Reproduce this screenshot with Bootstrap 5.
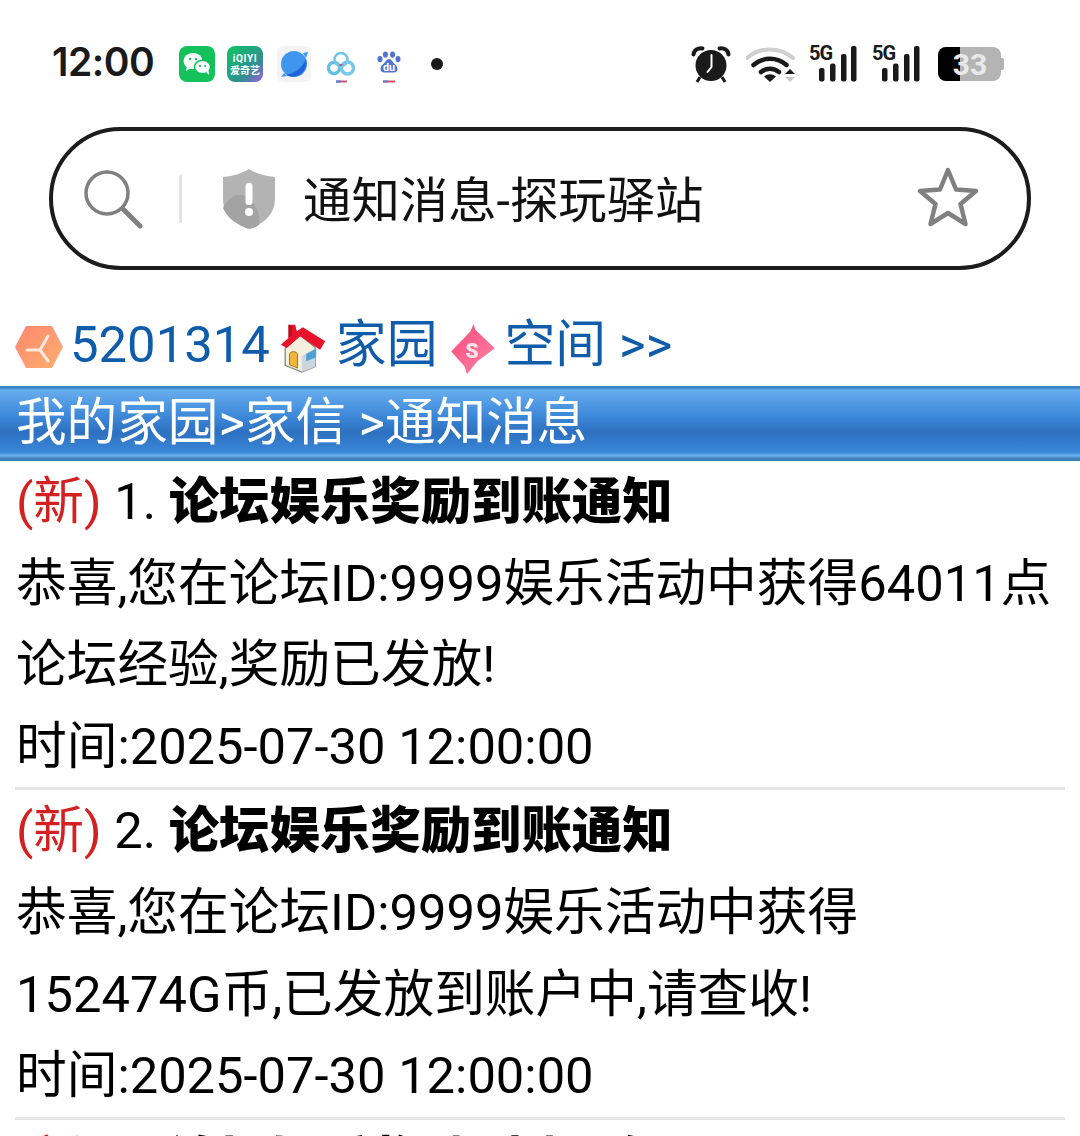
<!DOCTYPE html>
<html lang="zh">
<head>
<meta charset="utf-8">
<title>通知消息-探玩驿站</title>
<link href="https://cdn.jsdelivr.net/npm/bootstrap@5.3.0/dist/css/bootstrap.min.css" rel="stylesheet">
<style>
  html, body { height: 1136px; overflow: hidden; background: #fff; }
  body { font-family: Roboto, "Noto Sans CJK SC", sans-serif; color: #000; }
  .phone-bar { height: 127px; padding: 0 76px 0 52px; }
  .clock { font-family: Inter, Roboto, sans-serif; font-size: 39px; font-weight: 600; color: #1a1a1a; width: 127px; letter-spacing: -.5px; margin-top: -2px; }
  .notif-dot { width: 12px; height: 12px; border-radius: 50%; background: #1a1a1a; margin-left: 27px; }
  .sb-gap-12 { margin-left: 12px; }
  .sb-gap-14 { margin-left: 14px; }
  .sb-gap-15 { margin-left: 15px; }
  .sb-gap-18 { margin-left: 18px; }
  .sb-gap-11 { margin-left: 11px; }
  .sb-gap-13 { margin-left: 13px; }
  .sb-gap-16 { margin-left: 16px; }
  .sb-signal { overflow: visible; }
  .addr-box { height: 143px; margin: 0 49px; border: 4px solid #1c1c1c; border-radius: 72px; padding: 0 48px 0 30px; }
  .addr-sep { width: 3px; height: 48px; background: #e2e2e2; margin: 0 38px 0 36px; }
  .addr-icon-shield { margin-left: 2px; }
  .addr-title { font-size: 48.4px; color: #111; margin: 7px 0 0 27px; line-height: 1; }
  .addr-star { margin-bottom: 4px; }
  .top-links { height: 116px; padding: 50px 0 0 15px; font-size: 50.8px; color: #0f5cab; line-height: 1; white-space: nowrap; }
  .link-hex { margin: 6px 7px 0 0; }
  .link-home { margin: 3px 9px 0 10px; }
  .link-spark { margin: 3px 9px 0 14px; }
  .link-more { margin-left: 13px; }
  .head-strip { height: 75px; font-size: 50.6px; line-height: 74px; color: #fff; padding-left: 16px; white-space: nowrap;
    background: linear-gradient(#3f83c4 0, #3f83c4 3%, #67adee 5%, #3d88d8 40%, #2d71c0 62%, #3a86d8 88%, #69b0ef 93%, #3f7fb8 97%); }
  .msg-line { font-size: 50.7px; line-height: 81.6px; padding-left: 16px; color: #000; white-space: nowrap; }
  .msg-line b { font-weight: 900; font-size: 50.4px; }
  .new-tag { color: #d42020; }
  .msg-rule { height: 3px; background: #e6e6e6; margin: 0 15px; }
</style>
</head>
<body>

<!-- status bar -->
<div class="phone-bar d-flex align-items-center justify-content-between">
  <div class="d-flex align-items-center">
    <div class="clock">12:00</div>
    <svg width="36" height="36" viewBox="0 0 36 36">
      <rect width="36" height="36" rx="8" fill="#14c25c"/>
      <ellipse cx="14" cy="15" rx="9.500" ry="8" fill="#fff"/>
      <path d="M8 20l-1 5 5-3z" fill="#fff"/>
      <ellipse cx="23.500" cy="21" rx="8" ry="6.800" fill="#fff" stroke="#14c25c" stroke-width="1.500"/>
      <path d="M27 26l3 3-.5-5z" fill="#fff"/>
      <circle cx="11" cy="13" r="1.200" fill="#14c25c"/><circle cx="17" cy="13" r="1.200" fill="#14c25c"/>
      <circle cx="21" cy="20" r="1.100" fill="#14c25c"/><circle cx="26" cy="20" r="1.100" fill="#14c25c"/>
    </svg>
    <svg class="sb-gap-12" width="36" height="36" viewBox="0 0 36 36">
      <defs><linearGradient id="iqiyi" x1="0" y1="0" x2="1" y2="1"><stop offset=".1" stop-color="#12bf6a"/><stop offset=".65" stop-color="#2f8f92"/><stop offset="1" stop-color="#a45be0"/></linearGradient></defs>
      <rect width="36" height="36" rx="8" fill="url(#iqiyi)"/>
      <text x="18" y="16" text-anchor="middle" font-family="Roboto, sans-serif" font-size="10" font-weight="700" fill="#fff" letter-spacing=".6">iQIYI</text>
      <text x="18" y="28" text-anchor="middle" font-family="'Noto Sans CJK SC', sans-serif" font-size="10" font-weight="700" fill="#fff">爱奇艺</text>
    </svg>
    <svg class="sb-gap-14" width="34" height="36" viewBox="0 0 34 36">
      <rect width="34" height="36" rx="6" fill="#f3f3f3"/>
      <circle cx="17" cy="18" r="13" fill="#3f96ee"/>
      <path d="M29 13c-3 8-10 14-20 16 5 3 13 2 17-3 3-4 4-9 3-13z" fill="#1f63d8"/>
      <path d="M26 7l5-1-2 6zM7 27l-3 4 6-1z" fill="#3f96ee"/>
    </svg>
    <svg class="sb-gap-15" width="30" height="38" viewBox="0 0 30 38">
      <circle cx="8" cy="23" r="5.500" fill="none" stroke="#62c0e4" stroke-width="3.500"/>
      <circle cx="21.500" cy="23" r="6" fill="none" stroke="#7cc8ea" stroke-width="3.500"/>
      <circle cx="15" cy="14.500" r="6.500" fill="none" stroke="#72c8e6" stroke-width="2.500"/>
      <path d="M10.500 16.500a5 5 0 0 0 9 0l-4.500 5z" fill="#d8406c"/>
      <rect x="10" y="35.500" width="11" height="2" fill="#d8506e"/>
      <rect x="10" y="35.500" width="5" height="2" fill="#5b7fd0"/>
    </svg>
    <svg class="sb-gap-18" width="30" height="38" viewBox="0 0 30 38">
      <g transform="translate(1.500 6) scale(.9)">
        <ellipse cx="5" cy="9" rx="2.800" ry="3.500" fill="#4f73cf"/>
        <ellipse cx="11" cy="4" rx="2.800" ry="3.500" fill="#4f73cf"/>
        <ellipse cx="19" cy="4" rx="2.800" ry="3.500" fill="#4f73cf"/>
        <ellipse cx="25" cy="9" rx="2.800" ry="3.500" fill="#4f73cf"/>
        <path d="M15 9c-3 0-4 4-7 6-3 2-4 9 2 9h10c6 0 5-7 2-9-3-2-4-6-7-6z" fill="#4f73cf"/>
        <text x="15" y="22" text-anchor="middle" font-family="Roboto, sans-serif" font-size="12" font-weight="700" fill="#fff">du</text>
      </g>
      <rect x="9" y="35.500" width="12" height="2" fill="#d8506e"/>
      <rect x="9" y="35.500" width="5" height="2" fill="#5b7fd0"/>
    </svg>
    <div class="notif-dot"></div>
  </div>

  <div class="d-flex align-items-center">
    <svg width="40" height="40" viewBox="0 0 40 40">
      <circle cx="20" cy="21.500" r="15.500" fill="#1a1a1a"/>
      <path d="M2.500 10.500a7 7 0 0 1 9-6M37.500 10.500a7 7 0 0 0-9-6" fill="none" stroke="#1a1a1a" stroke-width="4" stroke-linecap="round"/>
      <path d="M9 33l-3 5M31 33l3 5" stroke="#1a1a1a" stroke-width="3"/>
      <path d="M20.500 11v12l-4 5" fill="none" stroke="#fff" stroke-width="2" stroke-linecap="round"/>
    </svg>
    <svg class="sb-gap-15" width="52" height="38" viewBox="0 0 52 38">
      <path d="M1 13a35 35 0 0 1 46 0" fill="none" stroke="#cfcfcf" stroke-width="4" stroke-linecap="round"/>
      <path d="M7.500 20a25 25 0 0 1 33 0" fill="none" stroke="#1a1a1a" stroke-width="4.500" stroke-linecap="round"/>
      <path d="M15 27a14 14 0 0 1 18 0" fill="none" stroke="#1a1a1a" stroke-width="4.500" stroke-linecap="round"/>
      <path d="M24 37l-6-5.500a9 9 0 0 1 12 0z" fill="#1a1a1a"/>
      <path d="M39 29h10l-5-5z" fill="#1a1a1a"/>
      <path d="M39 32h10l-5 5z" fill="#c8c8c8"/>
    </svg>
    <svg class="sb-gap-11 sb-signal" width="50" height="38" viewBox="0 0 50 38">
      <text x="0" y="15" font-family="Roboto, sans-serif" font-size="20" font-weight="700" fill="#1a1a1a" letter-spacing="-1">5G</text>
      <rect x="10" y="23" width="5.500" height="13.500" rx="2" fill="#1a1a1a"/>
      <rect x="21" y="18.500" width="5.500" height="18" rx="2" fill="#1a1a1a"/>
      <rect x="32" y="9" width="5.500" height="27.500" rx="2" fill="#1a1a1a"/>
      <rect x="42" y="1" width="5.500" height="35.500" rx="2" fill="#1a1a1a"/>
    </svg>
    <svg class="sb-gap-13 sb-signal" width="50" height="38" viewBox="0 0 50 38">
      <text x="0" y="15" font-family="Roboto, sans-serif" font-size="20" font-weight="700" fill="#1a1a1a" letter-spacing="-1">5G</text>
      <rect x="10" y="23" width="5.500" height="13.500" rx="2" fill="#1a1a1a"/>
      <rect x="21" y="18.500" width="5.500" height="18" rx="2" fill="#1a1a1a"/>
      <rect x="32" y="9" width="5.500" height="27.500" rx="2" fill="#1a1a1a"/>
      <rect x="42" y="1" width="5.500" height="35.500" rx="2" fill="#1a1a1a"/>
    </svg>
    <svg class="sb-gap-16" width="66" height="34" viewBox="0 0 66 34">
      <rect x="0" y="0" width="63" height="34" rx="8" fill="#b4b4b4"/>
      <path d="M8 0h14v34H8a8 8 0 0 1-8-8V8a8 8 0 0 1 8-8z" fill="#000"/>
      <path d="M63 11h1a2 2 0 0 1 2 2v8a2 2 0 0 1-2 2h-1z" fill="#b4b4b4"/>
      <text x="32" y="28" text-anchor="middle" font-family="Roboto, sans-serif" font-size="30" font-weight="700" fill="#e9e9e9">33</text>
    </svg>
  </div>
</div>

<!-- address bar -->
<div class="addr-box d-flex align-items-center">
  <svg width="60" height="60" viewBox="0 0 60 60">
    <circle cx="24" cy="24" r="21" fill="none" stroke="#808080" stroke-width="3.500"/>
    <path d="M40 40l17 17" stroke="#808080" stroke-width="5" stroke-linecap="round"/>
  </svg>
  <div class="addr-sep"></div>
  <svg class="addr-icon-shield" width="54" height="62" viewBox="0 0 54 62">
    <path d="M27 1c6 4 15 7 26 8v22c0 15-11 25-26 30C12 56 1 46 1 31V9c11-1 20-4 26-8z" fill="#b3b3b3"/>
    <path d="M1 40C8 26 20 24 27 30c8 7 12 20 10 27-3 2-6 3-10 4C14 56 5 50 1 40z" fill="#a3a3a3"/>
    <rect x="23.500" y="15" width="7" height="22" rx="3" fill="#fff"/>
    <circle cx="27" cy="44" r="4" fill="#fff"/>
  </svg>
  <div class="addr-title flex-grow-1">通知消息-探玩驿站</div>
  <svg class="addr-star" width="62" height="60" viewBox="0 0 62 60">
    <path d="M31 3l8 19.500 20 1.500-15.500 13 5 20L31 46 13.500 57l5-20L3 24l20-1.500z" fill="none" stroke="#808080" stroke-width="4.500" stroke-linejoin="round"/>
  </svg>
</div>

<!-- user links -->
<div class="top-links d-flex align-items-start">
  <svg class="link-hex flex-shrink-0" width="48" height="42" viewBox="0 0 48 42">
    <defs><linearGradient id="hexfill" x1="0" y1="0" x2="1" y2="1"><stop offset="0" stop-color="#ff8670"/><stop offset="1" stop-color="#fdb070"/></linearGradient></defs>
    <path d="M11 0h26l11 21-11 21H11L0 21z" fill="url(#hexfill)"/>
    <path d="M25 24L12 24M25 24l8-14M25 24l8 11" stroke="#ffe9dc" stroke-width="3" stroke-linecap="round" fill="none"/>
  </svg>
  <span>5201314</span>
  <svg class="link-home flex-shrink-0" width="47" height="50" viewBox="10 25 140 150">
    <path d="M25 100L70 62l45 36v58l-40 16-50-20z" fill="#f6efdd" stroke="#8a8a80" stroke-width="4"/>
    <path d="M75 172l40-16V100L75 125z" fill="#c9d6dc"/>
    <path d="M88 118l30-16v26l-30 12z" fill="#4f9fd8"/>
    <path d="M38 150v-30c0-12 24-12 24 0v40z" fill="#f2b53c" stroke="#a07820" stroke-width="3"/>
    <path d="M12 90l23-20V30h20l5 20 18-12 67 42-15 25-16-10-44-30-40 35z" fill="#e8122c"/>
    <path d="M12 90l23-20V30l10 2v30z" fill="#b8101f"/>
  </svg>
  <span>家园</span>
  <svg class="link-spark flex-shrink-0" width="44" height="52" viewBox="28 25 130 155">
    <defs><linearGradient id="sparkfill" x1="0" y1="0" x2="1" y2="1"><stop offset="0" stop-color="#f6487c"/><stop offset="1" stop-color="#ff86a6"/></linearGradient></defs>
    <path d="M95 28l5 17 58 55-53 40-30 38-7-23-40-45 57-60z" fill="url(#sparkfill)"/>
    <text x="90" y="130" text-anchor="middle" font-family="Roboto, sans-serif" font-size="62" font-weight="900" fill="#ffe3ea">S</text>
  </svg>
  <span>空间</span>
  <span class="link-more">&gt;&gt;</span>
</div>

<div class="head-strip">我的家园&gt;家信 &gt;通知消息</div>

<!-- messages -->
<div>
  <div class="msg-line"><span class="new-tag">(新)</span> 1. <b>论坛娱乐奖励到账通知</b></div>
  <div class="msg-line">恭喜,您在论坛ID:9999娱乐活动中获得64011点</div>
  <div class="msg-line">论坛经验,奖励已发放!</div>
  <div class="msg-line">时间:2025-07-30 12:00:00</div>
  <div class="msg-rule"></div>
  <div class="msg-line"><span class="new-tag">(新)</span> 2. <b>论坛娱乐奖励到账通知</b></div>
  <div class="msg-line">恭喜,您在论坛ID:9999娱乐活动中获得</div>
  <div class="msg-line">152474G币,已发放到账户中,请查收!</div>
  <div class="msg-line">时间:2025-07-30 12:00:00</div>
  <div class="msg-rule"></div>
  <div class="msg-line"><span class="new-tag">(新)</span> 3. <b>论坛娱乐奖励到账通知</b></div>
</div>

<script src="https://cdn.jsdelivr.net/npm/bootstrap@5.3.0/dist/js/bootstrap.bundle.min.js"></script>
</body>
</html>
